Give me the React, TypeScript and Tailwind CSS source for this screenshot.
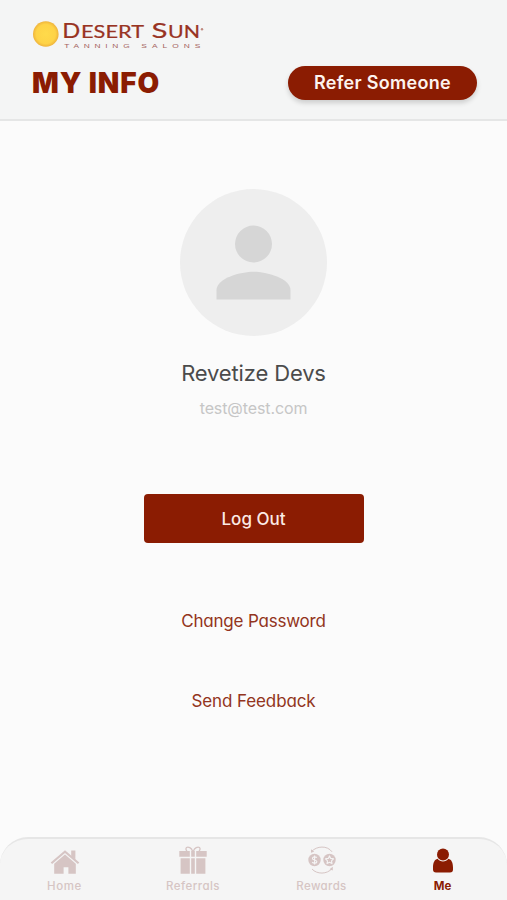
import { ReactNode } from "react";

interface NavItemProps {
  label: string;
  itemClass: string;
  labelClass: string;
  children: ReactNode;
}

const Logo = () => (
  <svg
    className="-ml-px block h-[32px] w-[176px]"
    viewBox="31 18 176 32"
    role="img"
    aria-label="Desert Sun Tanning Salons"
  >
    <defs>
      <radialGradient id="sun">
        <stop offset="0" stopColor="#ffda4b" />
        <stop offset="0.75" stopColor="#fed347" />
        <stop offset="1" stopColor="#efb43c" />
      </radialGradient>
    </defs>
    <circle cx="45.8" cy="34" r="12.8" fill="url(#sun)" />
    <g fill="#983322" stroke="#983322" strokeWidth="0.2" fontFamily="Lato, sans-serif">
      <text x="62.3" y="38.4" fontSize="21.6" textLength="18" lengthAdjust="spacingAndGlyphs">D</text>
      <text x="81" y="38.4" fontSize="16.4" textLength="63" lengthAdjust="spacingAndGlyphs">ESERT</text>
      <text x="151.5" y="38.4" fontSize="21.6" textLength="16" lengthAdjust="spacingAndGlyphs">S</text>
      <text x="168" y="38.4" fontSize="16.4" textLength="32" lengthAdjust="spacingAndGlyphs">UN</text>
    </g>
    <circle cx="202" cy="29.2" r="1.2" fill="#c08a80" />
    <g fill="#a4635d" fontFamily="'Liberation Sans', sans-serif" fontSize="6.2">
      <text transform="translate(64.2 47.8) scale(1.35 1)" textLength="48.5" lengthAdjust="spacing">
        TANNING
      </text>
      <text transform="translate(141.3 47.8) scale(1.35 1)" textLength="43.8" lengthAdjust="spacing">
        SALONS
      </text>
    </g>
  </svg>
);

const NavItem = ({ label, itemClass, labelClass, children }: NavItemProps) => (
  <button
    type="button"
    className={`flex cursor-pointer flex-col items-center pt-[6px] ${itemClass}`}
  >
    {children}
    <span className={`mt-1 text-[11.5px] leading-[14px] whitespace-nowrap ${labelClass}`}>
      {label}
    </span>
  </button>
);

const HomeIcon = () => (
  <svg className="h-[30px] w-[30px]" viewBox="0 0 30 30" fill="currentColor">
    <path d="M15 5.2 29.3 17.4 27.9 19 15 8 2.1 19 .7 17.4z" />
    <path d="M21.2 5.6h4.2v9.2l-4.2-3.6z" />
    <path d="M15 9.6 25.8 18.8V28.8H18.4V22.2H13.6V28.8H4.2V18.8z" />
  </svg>
);

const GiftIcon = () => (
  <svg className="h-[30px] w-[30px]" viewBox="0 0 30 30">
    <path
      fill="currentColor"
      d="M1.3 6h10.5v5.8H1.3zM13.2 6h3.6v5.8h-3.6zM18.2 6h10.5v5.8H18.2zM2.6 13.2h9.2v15.6H2.6zM13.2 13.2h3.6v15.6h-3.6zM18.2 13.2h9.2v15.6h-9.2z"
    />
    <path
      fill="none"
      stroke="currentColor"
      strokeWidth="1.3"
      d="M14.6 6.2C13.5 2.8 10.2 1.4 8.6 2.5 7.5 3.4 7.8 5 9 6M15.4 6.2c1.1-3.4 4.4-4.8 6-3.7 1.1.9.8 2.5-.4 3.5"
    />
  </svg>
);

const RewardsIcon = () => (
  <svg className="h-[30px] w-[30px]" viewBox="0 0 30 30" fill="none">
    <path
      stroke="currentColor"
      strokeWidth="1"
      d="M4.7 6.4C9.8.9 20.2.2 25 6.8M25 23.5C20.2 29.5 9.8 29.5 5 24"
    />
    <path fill="currentColor" d="M4 4.2v3.6l3.2-1zM25.8 21.8v3.8l-3.3-1.4z" />
    <circle cx="7.5" cy="15" r="6.2" fill="currentColor" />
    <circle cx="22.5" cy="15" r="6.2" fill="currentColor" />
    <path
      stroke="#f5f5f5"
      strokeWidth="1.1"
      d="M9.8 12.7c-1-1.3-4.4-1.1-4.4.7 0 2.1 4.5 1.1 4.5 3.3 0 1.8-3.6 1.9-4.7.4M7.6 10.6v8.8"
    />
    <path
      stroke="#f5f5f5"
      strokeWidth="1.1"
      strokeLinejoin="round"
      d="m22.5 10.9 1.2 2.5 2.8.4-2 2 .5 2.8-2.5-1.3-2.5 1.3.5-2.8-2-2 2.8-.4z"
    />
  </svg>
);

const MeIcon = () => (
  <svg className="h-[30px] w-[30px]" viewBox="0 0 30 30" fill="currentColor">
    <circle cx="15" cy="9.5" r="6" />
    <path d="M9.6 13.8C6.5 14.6 5 17.8 5 22.6v1.8c0 2 1 3 3 3h14c2 0 3-1 3-3v-1.8c0-4.8-1.5-8-4.6-8.8-2.6 3.5-8.2 3.5-10.8 0z" />
  </svg>
);

export default function App() {
  return (
    <div className="flex h-[900px] w-full flex-col overflow-hidden bg-[#fbfbfb] font-['Inter',sans-serif] [font-feature-settings:'cv11']">
      {/* HEADER */}
      <header className="h-[121px] shrink-0 border-b-2 border-[#e5e6e6] bg-[#f4f5f5] pt-[18px] pr-[30px] pl-8">
        <Logo />
        <div className="mt-4 flex items-center justify-between">
          <h1 className="text-[28px] leading-[34px] font-black tracking-[0.9px] text-[#8b1c02]">
            MY INFO
          </h1>
          <button
            type="button"
            className="h-[34px] w-[189px] cursor-pointer rounded-full bg-[#8b1c02] text-[18px] leading-[34px] font-semibold tracking-[0.3px] whitespace-nowrap text-[#fdf3ef] shadow-[0_3px_5px_rgba(0,0,0,0.16)]"
          >
            Refer Someone
          </button>
        </div>
      </header>

      {/* PROFILE */}
      <main className="flex flex-1 flex-col items-center pt-[68px]">
        <div className="flex size-[147px] items-center justify-center rounded-full bg-[#eeeeee]">
          <svg className="size-[111px] text-[#d6d6d6]" viewBox="0 0 24 24" fill="currentColor">
            <circle cx="12" cy="8" r="4" />
            <path d="M12 14c-2.67 0-8 1.34-8 4v2h16v-2c0-2.66-5.33-4-8-4z" />
          </svg>
        </div>
        <h2 className="mt-[23px] text-[22px] leading-[28px] tracking-[-0.15px] text-[#4b4b4b]">
          Revetize Devs
        </h2>
        <p className="mt-[9px] text-[16px] leading-[24px] tracking-[-0.1px] text-[#c6c6c6]">
          test@test.com
        </p>
        <button
          type="button"
          className="mt-[74px] h-[49px] w-[220px] cursor-pointer rounded-[4px] bg-[#8b1c02] pt-[2px] text-[17px] font-medium text-[#fbeae5]"
        >
          Log Out
        </button>
        <button
          type="button"
          className="mt-[66px] cursor-pointer text-[17px] leading-[24px] tracking-[-0.2px] text-[#923420]"
        >
          Change Password
        </button>
        <button
          type="button"
          className="mt-[56px] cursor-pointer text-[17px] leading-[24px] tracking-[-0.1px] text-[#923420]"
        >
          Send Feedback
        </button>
      </main>

      {/* BOTTOM NAVIGATION */}
      <nav className="flex h-[63px] shrink-0 rounded-t-[28px] border-t-2 border-[#e6e6e6] bg-[#f5f5f5]">
        <NavItem
          label="Home"
          itemClass="w-[129px] text-[#d6c5c4]"
          labelClass="font-medium tracking-[0.6px]"
        >
          <HomeIcon />
        </NavItem>
        <NavItem
          label="Referrals"
          itemClass="w-[128px] text-[#d6c5c4]"
          labelClass="font-medium tracking-[0.45px]"
        >
          <GiftIcon />
        </NavItem>
        <NavItem
          label="Rewards"
          itemClass="w-[129px] text-[#d6c5c4]"
          labelClass="font-medium tracking-[0.35px]"
        >
          <RewardsIcon />
        </NavItem>
        <NavItem label="Me" itemClass="w-[113px] text-[#8b1c02]" labelClass="font-bold">
          <MeIcon />
        </NavItem>
      </nav>
    </div>
  );
}
